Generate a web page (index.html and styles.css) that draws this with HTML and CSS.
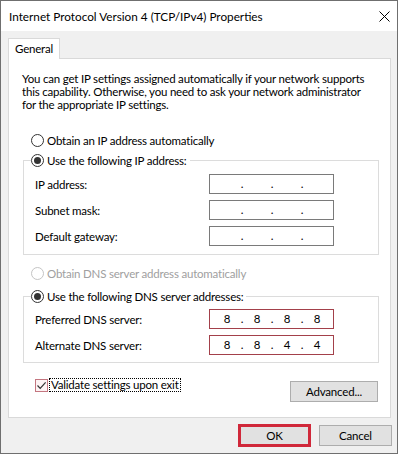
FILE: index.html
```html
<!doctype html>
<html>
	<head>
		<meta charset="utf-8">
		<title>Internet Protocol Version 4 (TCP/IPv4) Properties</title>
		<link rel="stylesheet" href="styles.css">
	</head>
	<body>
		<div class="window">
			<div class="titlebar">
				<span class="title">Internet Protocol Version 4 (TCP/IPv4) Properties</span>
				<svg class="close" width="11" height="11" viewBox="0 0 11 11"><path d="M0.5 0.5L10.5 10.5M10.5 0.5L0.5 10.5" stroke="#000" stroke-width="1"/></svg>
			</div>
			<div class="content">
				<div class="tabs"><div class="tab">General</div></div>
				<div class="panel">
					<p class="desc">You can get IP settings assigned automatically if your network supports<br>this capability. Otherwise, you need to ask your network administrator<br>for the appropriate IP settings.</p>

					<div class="radio-row first"><span class="radio"></span>Obtain an IP address automatically</div>
					<fieldset class="group ip-group">
						<legend><span class="radio checked"></span>Use the following IP address:</legend>
						<div class="field">
							<span>IP address:</span>
							<div class="ipbox"><span class="seg"></span><span class="dot">.</span><span class="seg"></span><span class="dot">.</span><span class="seg"></span><span class="dot">.</span><span class="seg"></span></div>
						</div>
						<div class="field">
							<span>Subnet mask:</span>
							<div class="ipbox"><span class="seg"></span><span class="dot">.</span><span class="seg"></span><span class="dot">.</span><span class="seg"></span><span class="dot">.</span><span class="seg"></span></div>
						</div>
						<div class="field">
							<span>Default gateway:</span>
							<div class="ipbox"><span class="seg"></span><span class="dot">.</span><span class="seg"></span><span class="dot">.</span><span class="seg"></span><span class="dot">.</span><span class="seg"></span></div>
						</div>
					</fieldset>

					<div class="radio-row disabled"><span class="radio"></span>Obtain DNS server address automatically</div>
					<fieldset class="group dns-group">
						<legend><span class="radio checked"></span>Use the following DNS server addresses:</legend>
						<div class="field">
							<span>Preferred DNS server:</span>
							<div class="ipbox marked"><span class="seg">8</span><span class="dot">.</span><span class="seg">8</span><span class="dot">.</span><span class="seg">8</span><span class="dot">.</span><span class="seg">8</span></div>
						</div>
						<div class="field">
							<span>Alternate DNS server:</span>
							<div class="ipbox marked"><span class="seg">8</span><span class="dot">.</span><span class="seg">8</span><span class="dot">.</span><span class="seg">4</span><span class="dot">.</span><span class="seg">4</span></div>
						</div>
					</fieldset>

					<div class="bottom-row">
						<div class="check-row">
							<span class="checkbox"><svg width="11" height="11" viewBox="0 0 11 11"><path d="M1.5 5.5L4.2 8.3L9.6 2.4" fill="none" stroke="#333" stroke-width="1.2"/></svg></span>
							<span class="focus">Validate settings upon exit</span>
						</div>
						<div class="btn advanced">Advanced...</div>
					</div>
				</div>
				<div class="footer">
					<div class="btn ok">OK</div>
					<div class="btn">Cancel</div>
				</div>
			</div>
		</div>
	</body>
</html>
```
FILE: styles.css
```css
* {
	margin: 0px;
	padding: 0px;
	box-sizing: border-box;
}
body {
	background: #fff;
	font-family: Lato, "Liberation Sans", sans-serif;
	font-size: 11.5px;
	letter-spacing: -0.2px;
	color: #000;
}
.window {
	width: 398px;
	height: 454px;
	border: 1px solid #6f6f6f;
	background: #f0f0f0;
	display: flex;
	flex-direction: column;
}
.titlebar {
	height: 30px;
	background: #fff;
	display: flex;
	align-items: center;
	justify-content: space-between;
	padding: 0 7px 0 8px;
	font-size: 11.75px;
	letter-spacing: 0;
}
.content {
	padding: 7px 6px 0 7px;
}
.tabs {
	display: flex;
}
.tab {
	position: relative;
	z-index: 1;
	width: 52px;
	height: 21px;
	margin-bottom: -1px;
	padding-left: 6px;
	line-height: 19px;
	background: #fff;
	border: 1px solid #d9d9d9;
	border-bottom: none;
}
.panel {
	width: 383px;
	height: 360px;
	background: #fff;
	border: 1px solid #d9d9d9;
	padding: 13px 11px 0 13px;
	display: flex;
	flex-direction: column;
}
.desc {
	line-height: 13px;
	white-space: nowrap;
}
.radio-row {
	display: flex;
	align-items: center;
	height: 16px;
	margin-left: 9px;
	margin-top: 10px;
	white-space: nowrap;
}
.radio-row.first {
	margin-top: 21px;
}
.radio {
	display: inline-block;
	position: relative;
	flex: none;
	width: 13px;
	height: 13px;
	border: 1px solid #333;
	border-radius: 50%;
	margin-right: 3px;
	background: #fff;
}
.radio.checked:after {
	content: "";
	position: absolute;
	left: 2px;
	top: 2px;
	width: 7px;
	height: 7px;
	border-radius: 50%;
	background: #333;
}
.disabled {
	color: #a0a0a0;
}
.disabled .radio {
	border-color: #c4c4c4;
}
.group {
	margin-left: 1px;
	border: 1px solid #dcdcdc;
	padding: 6px 0 8px 11px;
	display: flex;
	flex-direction: column;
	gap: 6px;
}
.group legend {
	display: flex;
	align-items: center;
	height: 16px;
	margin-left: -4px;
	padding-right: 3px;
	white-space: nowrap;
}
.ip-group {
	margin-top: 4px;
}
.dns-group {
	margin-top: 7px;
	padding-top: 5px;
	padding-bottom: 7px;
}
.field {
	display: grid;
	grid-template-columns: 174px 125px;
	align-items: center;
	height: 20px;
}
.ipbox {
	display: flex;
	height: 20px;
	padding-left: 6px;
	border: 1px solid #7a7a7a;
	line-height: 18px;
	letter-spacing: 0;
}
.ipbox.marked {
	border-color: #a3404a;
}
.seg {
	width: 22px;
	text-align: center;
}
.dot {
	width: 8px;
	text-align: center;
}
.bottom-row {
	display: flex;
	justify-content: space-between;
	align-items: flex-start;
	margin-top: 15px;
}
.check-row {
	display: flex;
	align-items: center;
	height: 14px;
	margin-left: 13px;
}
.checkbox {
	display: flex;
	align-items: center;
	justify-content: center;
	width: 13px;
	height: 13px;
	border: 1px solid #c47680;
	background: #fdf3f4;
}
.focus {
	margin-left: 1px;
	padding: 0 1px;
	line-height: 12px;
	border: 1px dotted #000;
	white-space: nowrap;
}
.btn {
	width: 73px;
	height: 21px;
	display: flex;
	align-items: center;
	justify-content: center;
	background: #e1e1e1;
	border: 1px solid #adadad;
}
.advanced {
	width: 88px;
	margin-top: 3px;
	margin-right: 1px;
}
.footer {
	display: flex;
	justify-content: flex-end;
	align-items: center;
	gap: 8px;
	padding-top: 6px;
	margin-right: -1px;
}
.btn.ok {
	height: 23px;
	border: 3px solid #d0283a;
}
```
